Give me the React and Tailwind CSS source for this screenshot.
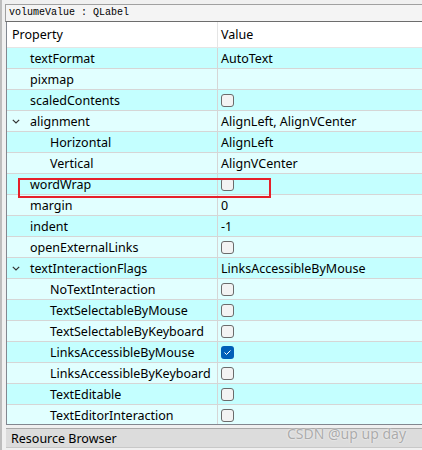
import React from "react";

const rows = [
  { name: "textFormat", value: "AutoText" },
  { name: "pixmap", value: "" },
  { name: "scaledContents", check: false },
  { name: "alignment", value: "AlignLeft, AlignVCenter", open: true },
  { name: "Horizontal", value: "AlignLeft", child: true },
  { name: "Vertical", value: "AlignVCenter", child: true },
  { name: "wordWrap", check: false },
  { name: "margin", value: "0" },
  { name: "indent", value: "-1" },
  { name: "openExternalLinks", check: false },
  { name: "textInteractionFlags", value: "LinksAccessibleByMouse", open: true },
  { name: "NoTextInteraction", check: false, child: true },
  { name: "TextSelectableByMouse", check: false, child: true },
  { name: "TextSelectableByKeyboard", check: false, child: true },
  { name: "LinksAccessibleByMouse", check: true, child: true },
  { name: "LinksAccessibleByKeyboard", check: false, child: true },
  { name: "TextEditable", check: false, child: true },
  { name: "TextEditorInteraction", check: false, child: true },
];

function Checkbox({ checked }) {
  if (checked) {
    return (
      <div className="w-[13px] h-[13px] rounded-[3px] bg-[#005fb8] flex items-center justify-center">
        <svg width="9" height="7" viewBox="0 0 9 7">
          <path d="M1.5 3.5 L3.5 5.5 L7.5 1.5" stroke="#fff" strokeWidth="1" fill="none" />
        </svg>
      </div>
    );
  }
  return <div className="w-[13px] h-[13px] rounded-[3px] border border-[#6b6b6b] bg-[#f3f3f3]" />;
}

function Row({ row, index }) {
  const bg = index % 2 === 0 ? "bg-[#c4ffff]" : "bg-[#e1ffff]";
  return (
    <div className={`flex h-[21px] border-b border-[#d6d6d6] ${bg}`}>
      <div className="w-[211px] shrink-0 flex items-center border-r border-[#d6d6d6]">
        <div className="w-[23px] flex justify-start pl-[5px]">
          {row.open && (
            <svg width="8" height="5" viewBox="0 0 8 5">
              <path d="M0.8 0.8 L4 4 L7.2 0.8" stroke="#333" strokeWidth="1.2" fill="none" />
            </svg>
          )}
        </div>
        <span className={`pt-[2px] ${row.child ? "pl-[20px]" : ""}`}>{row.name}</span>
      </div>
      <div className="flex-1 flex items-center pl-[3px]">
        {row.check !== undefined ? <Checkbox checked={row.check} /> : <span className="pt-[2px]">{row.value}</span>}
      </div>
    </div>
  );
}

export default function App() {
  return (
    <div className="relative w-[422px] h-[450px] overflow-hidden bg-[#f0f0f0] flex text-[12.5px] text-black font-['Noto_Sans',sans-serif]">
      {/* left frame strip */}
      <div className="w-[2px] bg-[#bdbdbd]" />
      <div className="w-[3px]" />

      <div className="flex-1 flex flex-col pt-[4px]">
        {/* object name bar */}
        <div className="h-[18px] border-t border-[#a0a0a0] border-b border-b-[#6d6d6d] border-l border-l-[#a0a0a0] bg-[#f4f4f4] flex items-center pl-[3px] font-['Liberation_Mono',monospace] text-[10px] leading-none">
          volumeValue : QLabel
        </div>

        {/* property table */}
        <div className="h-[403px] ml-[1px] border-l border-b border-[#828790] bg-white overflow-hidden">
          <div className="flex h-[26px] border-b border-[#e5e5e5]">
            <div className="w-[211px] shrink-0 flex items-center pl-[5px] pt-[2px] border-r border-[#e5e5e5]">Property</div>
            <div className="flex-1 flex items-center pl-[3px] pt-[2px]">Value</div>
          </div>
          {rows.map((r, i) => (
            <Row key={r.name} row={r} index={i} />
          ))}
        </div>

        <div className="h-[3px]" />
        {/* resource browser dock title */}
        <div className="h-[20px] ml-[1px] border-t border-[#a9a9a9] border-b border-b-[#c8c8c8] bg-[#dcdcdc] flex items-center pl-[5px] pt-[2px]">
          Resource Browser
        </div>
      </div>

      {/* selection highlight */}
      <div className="absolute left-[18px] top-[178px] w-[253px] h-[20px] border-2 border-[#e5202a]" />

      {/* watermark */}
      <div className="absolute left-[287px] top-[423px] text-[14px] text-[#ababab] [text-shadow:0_0_2px_#ffffff]">
        CSDN @up up day
      </div>
    </div>
  );
}
